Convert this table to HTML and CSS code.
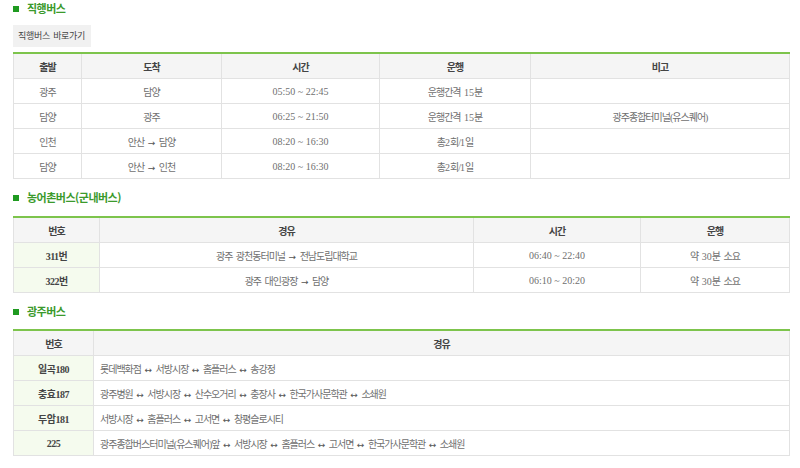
FILE: index.html
```html
<!DOCTYPE html>
<html lang="ko">
<head>
<meta charset="utf-8">
<title>버스 안내</title>
<link rel="stylesheet" href="styles.css">
</head>
<body>
<div class="wrap">
  <h3 class="sec-title first">직행버스</h3>
  <a class="btn" href="#">직행버스 바로가기</a>
  <table class="tbl t1">
    <colgroup>
      <col class="c1-1"><col class="c1-2"><col class="c1-3"><col class="c1-4"><col class="c1-5">
    </colgroup>
    <thead>
      <tr><th>출발</th><th>도착</th><th>시간</th><th>운행</th><th>비고</th></tr>
    </thead>
    <tbody>
      <tr><td>광주</td><td>담양</td><td class="time">05:50 ~ 22:45</td><td>운행간격 <span class="dg">15</span>분</td><td></td></tr>
      <tr><td>담양</td><td>광주</td><td class="time">06:25 ~ 21:50</td><td>운행간격 <span class="dg">15</span>분</td><td>광주종합터미널(유스퀘어)</td></tr>
      <tr class="split"><td>인천</td><td>안산 <span class="ar">→</span> 담양</td><td class="time">08:20 ~ 16:30</td><td>총<span class="dg">2</span>회/<span class="dg">1</span>일</td><td></td></tr>
      <tr><td>담양</td><td>안산 <span class="ar">→</span> 인천</td><td class="time">08:20 ~ 16:30</td><td>총<span class="dg">2</span>회/<span class="dg">1</span>일</td><td></td></tr>
    </tbody>
  </table>

  <h3 class="sec-title">농어촌버스(군내버스)</h3>
  <table class="tbl t2">
    <colgroup>
      <col class="c2-1"><col class="c2-2"><col class="c2-3"><col class="c2-4">
    </colgroup>
    <thead>
      <tr><th>번호</th><th>경유</th><th>시간</th><th>운행</th></tr>
    </thead>
    <tbody>
      <tr><td class="num">311번</td><td>광주 광천동터미널 <span class="ar">→</span> 전남도립대학교</td><td class="time">06:40 ~ 22:40</td><td>약 <span class="dg">30</span>분 소요</td></tr>
      <tr><td class="num">322번</td><td>광주 대인광장 <span class="ar">→</span> 담양</td><td class="time">06:10 ~ 20:20</td><td>약 <span class="dg">30</span>분 소요</td></tr>
    </tbody>
  </table>

  <h3 class="sec-title">광주버스</h3>
  <table class="tbl t3">
    <colgroup>
      <col class="c3-1"><col class="c3-2">
    </colgroup>
    <thead>
      <tr><th>번호</th><th>경유</th></tr>
    </thead>
    <tbody>
      <tr><td class="num">일곡180</td><td class="left">롯데백화점 <span class="ar">↔</span> 서방시장 <span class="ar">↔</span> 홈플러스 <span class="ar">↔</span> 송강정</td></tr>
      <tr><td class="num">충효187</td><td class="left">광주병원 <span class="ar">↔</span> 서방시장 <span class="ar">↔</span> 산수오거리 <span class="ar">↔</span> 충장사 <span class="ar">↔</span> 한국가사문학관 <span class="ar">↔</span> 소쇄원</td></tr>
      <tr><td class="num">두암181</td><td class="left">서방시장 <span class="ar">↔</span> 홈플러스 <span class="ar">↔</span> 고서면 <span class="ar">↔</span> 창평슬로시티</td></tr>
      <tr><td class="num">225</td><td class="left">광주종합버스터미널(유스퀘어)앞 <span class="ar">↔</span> 서방시장 <span class="ar">↔</span> 홈플러스 <span class="ar">↔</span> 고서면 <span class="ar">↔</span> 한국가사문학관 <span class="ar">↔</span> 소쇄원</td></tr>
    </tbody>
  </table>
</div>
</body>
</html>
```
FILE: styles.css
```css
html, body {
  margin: 0;
  padding: 0;
  background: #fff;
}
body {
  font-family: "Liberation Serif", "Noto Sans CJK KR", serif;
  font-size: 10px;
  letter-spacing: -1px;
  word-spacing: 2px;
  color: #6f6f6f;
}
.wrap {
  padding: 0 11px 0 13px;
  display: flex;
  flex-direction: column;
  align-items: flex-start;
}
.sec-title {
  margin: 10px 0 0 0;
  padding-left: 14px;
  position: relative;
  font-family: "Noto Sans CJK KR", sans-serif;
  font-size: 11px;
  letter-spacing: -0.5px;
  word-spacing: 0;
  font-weight: bold;
  line-height: 16px;
  height: 16px;
  color: #3b9a2c;
}
.sec-title.first {
  margin-top: 0;
}
.sec-title::before {
  content: "";
  position: absolute;
  left: 0;
  top: 6px;
  width: 6px;
  height: 6px;
  background: #1f9a20;
}
.btn {
  margin-top: 9px;
  display: block;
  height: 22px;
  line-height: 22px;
  padding: 0 6px 0 5px;
  background: #f1f1f1;
  color: #444;
  font-family: "Noto Sans CJK KR", sans-serif;
  font-size: 9px;
  letter-spacing: -0.3px;
  word-spacing: 1px;
  text-decoration: none;
}
.tbl {
  width: 776px;
  table-layout: fixed;
  border-collapse: collapse;
  border-top: 2px solid #7dc44c;
  margin-top: 11px;
}
.t1 { margin-top: 5px; }
.t3 { margin-top: 10px; }
.tbl th,
.tbl td {
  border: 1px solid #e2e2e2;
  padding: 0;
  text-align: center;
  vertical-align: middle;
  font-weight: normal;
  white-space: nowrap;
}
.tbl th {
  height: 24px;
  background: #f5f5f5;
  color: #444;
  font-weight: bold;
}
.tbl td {
  height: 24px;
}
.tbl td.time {
  letter-spacing: 0;
  word-spacing: 0;
}
.dg {
  letter-spacing: 0;
}
.tbl tr.split td {
  border-top-color: #cfcfcf;
}
.tbl td.num {
  background: #f5fbee;
  color: #444;
  font-weight: bold;
  letter-spacing: -0.5px;
}
.tbl td.left {
  text-align: left;
  padding-left: 6px;
}
.ar {
  font-family: "DejaVu Sans", sans-serif;
  font-size: 9px;
  letter-spacing: 0;
  color: #555;
}
.c1-1 { width: 68px; }
.c1-2 { width: 140px; }
.c1-3 { width: 158px; }
.c1-4 { width: 151px; }
.c1-5 { width: 259px; }
.c2-1 { width: 86px; }
.c2-2 { width: 374px; }
.c2-3 { width: 167px; }
.c2-4 { width: 149px; }
.c3-1 { width: 80px; }
.c3-2 { width: 696px; }
```
